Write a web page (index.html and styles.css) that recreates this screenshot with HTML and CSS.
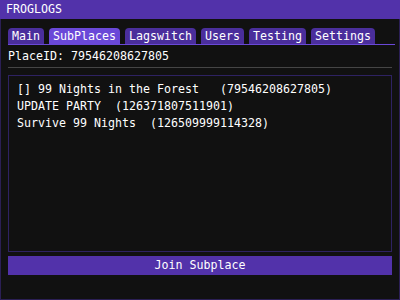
FILE: index.html
```html
<!DOCTYPE html>
<html>
<head>
<meta charset="utf-8">
<link rel="stylesheet" href="styles.css">
</head>
<body>
<div class="window">
  <div class="titlebar">FROGLOGS</div>
  <div class="content">
    <div class="tabbar">
      <div class="tab">Main</div>
      <div class="tab active">SubPlaces</div>
      <div class="tab">Lagswitch</div>
      <div class="tab">Users</div>
      <div class="tab">Testing</div>
      <div class="tab">Settings</div>
    </div>
    <div class="placeid">PlaceID: 79546208627805</div>
    <div class="separator"></div>
    <div class="list">
      <div class="item">[] 99 Nights in the Forest   (79546208627805)</div>
      <div class="item">UPDATE PARTY  (126371807511901)</div>
      <div class="item">Survive 99 Nights  (126509999114328)</div>
    </div>
    <div class="button">Join Subplace</div>
  </div>
</div>
</body>
</html>
```
FILE: styles.css
```css
html, body {
  margin: 0;
  padding: 0;
  background: #111111;
}
body {
  width: 400px;
  height: 300px;
  font-family: "DejaVu Sans Mono", "Liberation Mono", monospace;
  font-size: 11.63px;
  line-height: 13px;
  color: #ffffff;
}
.window {
  box-sizing: border-box;
  width: 400px;
  height: 300px;
  border: 1px solid #2b1f55;
  border-top: none;
  background: #111111;
}
.titlebar {
  height: 19px;
  box-sizing: border-box;
  padding: 3px 0 0 6px;
  margin: 0 -1px;
  background: #5232aa;
  white-space: pre;
}
.content {
  padding: 0 7px;
  display: flex;
  flex-direction: column;
}
.tabbar {
  display: flex;
  gap: 5px;
  margin-top: 9px;
  margin-right: -3px;
  border-bottom: 1px solid #6a48d8;
}
.tab {
  height: 16px;
  box-sizing: border-box;
  padding: 2px 4px 0 4px;
  background: #4a2e9c;
  border-radius: 4px 4px 0 0;
  white-space: pre;
}
.tab.active {
  background: #6a48d8;
}
.placeid {
  margin-top: 5px;
  white-space: pre;
}
.separator {
  margin-top: 4px;
  height: 1px;
  background: #454545;
}
.list {
  margin-top: 7px;
  box-sizing: border-box;
  height: 177px;
  border: 1px solid #2e2262;
  padding: 7px 8px;
  display: flex;
  flex-direction: column;
  gap: 4px;
}
.item {
  white-space: pre;
}
.button {
  margin-top: 4px;
  height: 19px;
  box-sizing: border-box;
  padding-top: 3px;
  background: #5232aa;
  text-align: center;
  white-space: pre;
}
```
